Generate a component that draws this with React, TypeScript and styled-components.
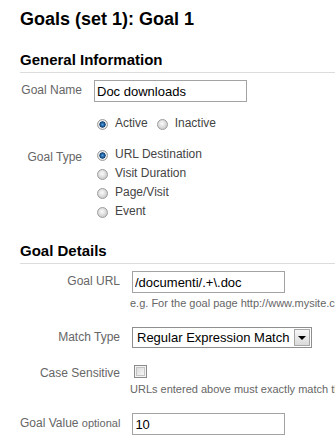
import * as React from "react";
import styled, { createGlobalStyle } from "styled-components";

const GlobalStyle = createGlobalStyle`
	html, body {
		margin: 0;
		padding: 0;
		background: #fff;
		overflow: hidden;
	}
	body {
		font-family: "Liberation Sans", Arial, sans-serif;
	}
`;

const Page = styled.div`
	padding: 8px 0 0 20px;
	overflow: hidden;
`;

const Title = styled.h1`
	margin: 0;
	font-size: 18px;
	line-height: 22px;
	font-weight: bold;
	color: #000;
`;

const SectionHeading = styled.h2`
	margin: 21px 0 0;
	padding-bottom: 3px;
	border-bottom: 1px solid #dcdcdc;
	font-size: 15px;
	line-height: 18px;
	font-weight: bold;
	color: #000;
`;

const Row = styled.div<{ $top: number }>`
	display: flex;
	align-items: flex-start;
	margin-top: ${p => p.$top}px;
`;

const Label = styled.div<{ $width: number; $pad?: number }>`
	flex: 0 0 ${p => p.$width}px;
	margin-right: 12px;
	padding-top: ${p => p.$pad ?? 3}px;
	text-align: right;
	white-space: nowrap;
	font-size: 12px;
	line-height: 14px;
	color: #666;
`;

const Optional = styled.span`
	font-size: 11px;
	color: #666;
`;

const Field = styled.div`
	display: flex;
	flex-direction: column;
	align-items: flex-start;
`;

const TextInput = styled.input`
	box-sizing: border-box;
	width: 153px;
	height: 22px;
	margin: 0;
	padding: 0 2px;
	border: 1px solid #a3a3a3;
	font-family: "Liberation Sans", Arial, sans-serif;
	font-size: 13px;
	color: #000;
	outline: none;
`;

// hint lines run past the right edge of the window, as in the original page
const Hint = styled.div<{ $top: number }>`
	margin: ${p => p.$top}px 0 0 -2px;
	font-size: 11px;
	line-height: 13px;
	color: #666;
	white-space: nowrap;
`;

const RadioInline = styled.div`
	display: flex;
	gap: 1px;
`;

const RadioList = styled.div`
	display: flex;
	flex-direction: column;
`;

const RadioOption = styled.label`
	display: flex;
	align-items: flex-start;
	height: 19px;
	font-size: 12px;
	line-height: 19px;
	color: #444;
	white-space: nowrap;
`;

const RadioDot = styled.span<{ $checked?: boolean; $first?: boolean }>`
	box-sizing: border-box;
	width: 11px;
	height: 11px;
	margin: 5px 7px 0 ${p => (p.$first ? 3 : 8)}px;
	border-radius: 50%;
	border: 1px solid #9c9c9c;
	background: ${p =>
		p.$checked
			? "radial-gradient(circle at 50% 50%, #5aa2de 0, #2468a8 1.6px, #0f3e6e 2.9px, #f4f4f4 3.4px, #d6d6d6 5px)"
			: "radial-gradient(circle at 45% 40%, #fbfbfb 0, #e6e6e6 2.5px, #cfcfcf 5px)"};
`;

const SelectBox = styled.div`
	box-sizing: border-box;
	display: flex;
	width: 180px;
	height: 21px;
	border: 1px solid #8e8e8e;
	background: #fff;
`;

const SelectText = styled.span`
	flex: 1;
	padding-left: 4px;
	font-size: 13px;
	line-height: 19px;
	color: #000;
	white-space: nowrap;
	overflow: hidden;
`;

const SelectButton = styled.span`
	box-sizing: border-box;
	display: flex;
	align-items: center;
	justify-content: center;
	width: 16px;
	margin: 1px;
	border: 1px solid #a7a7a7;
	background: linear-gradient(#f6f6f6, #dadada);
`;

const Arrow = styled.span`
	width: 0;
	height: 0;
	border-left: 4px solid transparent;
	border-right: 4px solid transparent;
	border-top: 4px solid #000;
`;

const Checkbox = styled.span`
	box-sizing: border-box;
	width: 13px;
	height: 13px;
	margin-left: 2px;
	border: 1px solid #8a8a8a;
	box-shadow: inset 0 0 0 1px #f4f4f4, inset 0 0 0 2px #c4c4c4;
	background: linear-gradient(135deg, #d4d4d4, #fdfdfd);
`;

const goalTypes = ["URL Destination", "Visit Duration", "Page/Visit", "Event"];

export default function App() {
	return (
		<>
			<GlobalStyle />
			<Page>
				<Title>Goals (set 1): Goal 1</Title>

				<SectionHeading>General Information</SectionHeading>
				<Row $top={7}>
					<Label $width={62}>Goal Name</Label>
					<TextInput defaultValue="Doc downloads" />
				</Row>
				<Row $top={12}>
					<Label $width={62} />
					<RadioInline>
						<RadioOption>
							<RadioDot $checked $first />
							Active
						</RadioOption>
						<RadioOption>
							<RadioDot />
							Inactive
						</RadioOption>
					</RadioInline>
				</Row>
				<Row $top={12}>
					<Label $width={62} $pad={5}>Goal Type</Label>
					<RadioList>
						{goalTypes.map((t, i) => (
							<RadioOption key={t}>
								<RadioDot $checked={i == 0} $first />
								{t}
							</RadioOption>
						))}
					</RadioList>
				</Row>

				<SectionHeading>Goal Details</SectionHeading>
				<Row $top={7}>
					<Label $width={100}>Goal URL</Label>
					<Field>
						<TextInput defaultValue="/documenti/.+\.doc" />
						<Hint $top={4}>e.g. For the goal page http://www.mysite.com/thankyou.html enter /thankyou.html</Hint>
					</Field>
				</Row>
				<Row $top={17}>
					<Label $width={100}>Match Type</Label>
					<SelectBox>
						<SelectText>Regular Expression Match</SelectText>
						<SelectButton>
							<Arrow />
						</SelectButton>
					</SelectBox>
				</Row>
				<Row $top={17}>
					<Label $width={100} $pad={1}>Case Sensitive</Label>
					<Field>
						<Checkbox />
						<Hint $top={5}>URLs entered above must exactly match the capitalization of visited URLs.</Hint>
					</Field>
				</Row>
				<Row $top={17}>
					<Label $width={100}>
						Goal Value <Optional>optional</Optional>
					</Label>
					<TextInput defaultValue="10" />
				</Row>
			</Page>
		</>
	);
}
